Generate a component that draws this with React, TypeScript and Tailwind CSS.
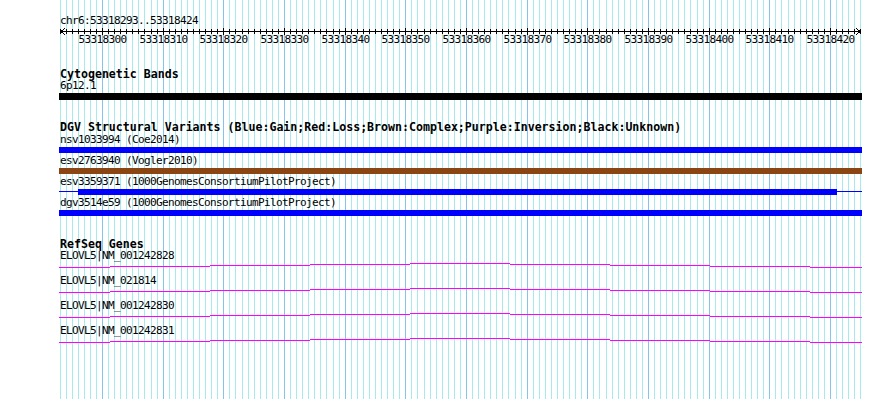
const BASE0 = 53318293;
const X0 = 59.5;
const PX = 6.067;
const xAt = (i: number) => Math.round(X0 + i * PX);
const positions = Array.from({ length: 133 }, (_, i) => i);
const isMajor = (i: number) => (BASE0 + i) % 10 === 0;

const mono = "font-['DejaVu_Sans_Mono','Liberation_Mono',monospace]";
const small = `${mono} text-[11px] leading-[12px] tracking-[-0.62px] h-[12px] whitespace-nowrap text-black`;
const bold = `${mono} text-[11.6px] font-bold leading-[12px] h-[12px] whitespace-nowrap text-black`;

const Grid = () => (
  <svg className="absolute inset-0" width={890} height={399} shapeRendering="crispEdges">
    {positions.map((i) => (
      <line
        key={i}
        x1={xAt(i) + 0.5}
        x2={xAt(i) + 0.5}
        y1={0}
        y2={399}
        stroke={isMajor(i) ? '#86c4ea' : '#a8e9ee'}
        strokeWidth={1}
      />
    ))}
  </svg>
);

const Ruler = () => (
  <svg width={890} height={21} shapeRendering="crispEdges" className="block">
    <line x1={60} x2={861} y1={4.5} y2={4.5} stroke="#000" />
    {positions.map((i) => {
      const x = xAt(i) + 0.5;
      const major = isMajor(i);
      return <line key={i} x1={x} x2={x} y1={major ? 1 : 2} y2={major ? 8 : 7} stroke="#000" />;
    })}
    <polyline points="65,1.5 60.5,4.5 65,7.5" fill="none" stroke="#000" />
    <polyline points="856,1.5 860.5,4.5 856,7.5" fill="none" stroke="#000" />
    {positions.filter(isMajor).map((i) => (
      <text
        key={i}
        x={xAt(i) + 0.5}
        y={16}
        textAnchor="middle"
        fontFamily="DejaVu Sans Mono, Liberation Mono, monospace"
        fontSize={11}
        letterSpacing={-0.62}
        fill="#000"
      >
        {BASE0 + i}
      </text>
    ))}
  </svg>
);

const variants = [
  { name: 'nsv1033994 (Coe2014)', color: 'bg-[#0000ff]', partial: false },
  { name: 'esv2763940 (Vogler2010)', color: 'bg-[#8b4513]', partial: false },
  { name: 'esv3359371 (1000GenomesConsortiumPilotProject)', color: 'bg-[#0000ff]', partial: true },
  { name: 'dgv3514e59 (1000GenomesConsortiumPilotProject)', color: 'bg-[#0000ff]', partial: false },
];

const transcripts = ['ELOVL5|NM_001242828', 'ELOVL5|NM_021814', 'ELOVL5|NM_001242830', 'ELOVL5|NM_001242831'];

const bounds = [59, 110, 210, 310, 410, 510, 610, 710, 810, 862];
const lifts = [0, 1, 2, 3, 4, 3, 2, 1, 0];

const GeneLine = () => (
  <svg width={890} height={13} shapeRendering="crispEdges" className="block">
    {lifts.map((lift, k) => (
      <line
        key={k}
        x1={bounds[k]}
        x2={bounds[k + 1]}
        y1={5.5 - lift}
        y2={5.5 - lift}
        stroke="#ff00ff"
        strokeWidth={1}
      />
    ))}
  </svg>
);

export default function App() {
  return (
    <div className="relative w-[890px] h-[399px] overflow-hidden bg-white">
      <Grid />
      <div className="relative flex flex-col pt-[15px]">
        <div className={`${small} pl-[60px]`}>chr6:53318293..53318424</div>
        <Ruler />

        <section className="mt-[20px] flex flex-col">
          <div className={`${bold} pl-[60px]`}>Cytogenetic Bands</div>
          <div className={`${small} pl-[60px]`}>6p12.1</div>
          <div className="mt-[1px] ml-[59px] w-[803px] h-[7px] bg-black" />
        </section>

        <section className="mt-[21px] flex flex-col">
          <div className={`${bold} pl-[60px]`}>DGV Structural Variants (Blue:Gain;Red:Loss;Brown:Complex;Purple:Inversion;Black:Unknown)</div>
          <div className="mt-[1px] flex flex-col gap-[2px]">
            {variants.map((v) => (
              <div key={v.name} className="flex flex-col">
                <div className={`${small} pl-[60px]`}>{v.name}</div>
                {v.partial ? (
                  <div className="mt-[1px] ml-[59px] w-[803px] h-[6px] flex items-start">
                    <div className="mt-[2px] w-[19px] h-[1px] bg-[#0000ff]" />
                    <div className={`w-[759px] h-[6px] ${v.color}`} />
                    <div className="mt-[2px] w-[25px] h-[1px] bg-[#0000ff]" />
                  </div>
                ) : (
                  <div className={`mt-[1px] ml-[59px] w-[803px] h-[6px] ${v.color}`} />
                )}
              </div>
            ))}
          </div>
        </section>

        <section className="mt-[22px] flex flex-col">
          <div className={`${bold} pl-[60px]`}>RefSeq Genes</div>
          {transcripts.map((t) => (
            <div key={t} className="flex flex-col">
              <div className={`${small} pl-[60px]`}>{t}</div>
              <GeneLine />
            </div>
          ))}
        </section>
      </div>
    </div>
  );
}
